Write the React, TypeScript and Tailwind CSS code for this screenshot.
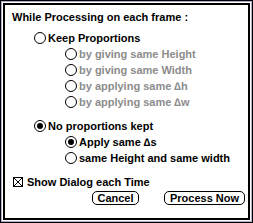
import React from 'react';

const font = "font-['Liberation_Sans',Arial,sans-serif]";

const Radio: React.FC<{ checked?: boolean }> = ({ checked }) => (
  <span className="flex h-[12px] w-[12px] shrink-0 items-center justify-center rounded-full border border-black bg-white">
    {checked && <span className="h-[6px] w-[6px] rounded-full bg-black" />}
  </span>
);

const Option: React.FC<{ label: string; checked?: boolean; disabled?: boolean; indent: string }> = ({
  label,
  checked,
  disabled,
  indent,
}) => (
  <div className={`flex h-[16px] items-center gap-[2px] ${indent}`}>
    <Radio checked={checked} />
    <span className={`text-[11px] font-bold leading-none ${disabled ? 'text-[#8c8c8c]' : 'text-black'}`}>{label}</span>
  </div>
);

const MacButton: React.FC<{ label: string; width: string }> = ({ label, width }) => (
  <button
    className={`flex h-[14px] items-center justify-center rounded-[5px] border border-black bg-white text-[11px] font-bold leading-none text-black ${width}`}
  >
    {label}
  </button>
);

export default function App() {
  return (
    <div className={`h-[223px] w-[253px] bg-white ${font}`}>
      <div className="h-full w-full border border-black">
        <div className="h-full w-full border border-[#b4a8cc]">
          <div className="h-full w-full border border-white">
            <div className="h-full w-full border-2 border-black pl-[7px] pt-[4px]">
              {/* Header */}
              <div className="flex h-[16px] items-center text-[11px] font-bold leading-none text-black">
                While Processing on each frame :
              </div>

              <div className="mt-[5px]">
                <Option label="Keep Proportions" indent="ml-[22px]" />
                <Option label="by giving same Height" disabled indent="ml-[53px]" />
                <Option label="by giving same Width" disabled indent="ml-[53px]" />
                <Option label="by applying same ∆h" disabled indent="ml-[53px]" />
                <Option label="by applying same ∆w" disabled indent="ml-[53px]" />
              </div>

              <div className="mt-[8px]">
                <Option label="No proportions kept" checked indent="ml-[22px]" />
                <Option label="Apply same ∆s" checked indent="ml-[53px]" />
                <Option label="same Height and same width" indent="ml-[53px]" />
              </div>

              {/* Checkbox */}
              <div className="mt-[8px] flex h-[16px] items-center gap-[4px] pl-[1px]">
                <svg width="10" height="10" viewBox="0 0 10 10" className="shrink-0">
                  <rect x="0.5" y="0.5" width="9" height="9" fill="white" stroke="black" />
                  <path d="M1 1 L9 9 M9 1 L1 9" stroke="black" strokeWidth="1" />
                </svg>
                <span className="text-[11px] font-bold leading-none text-black">Show Dialog each Time</span>
              </div>

              {/* Buttons */}
              <div className="mt-[1px] flex">
                <div className="ml-[80px]">
                  <MacButton label="Cancel" width="w-[47px]" />
                </div>
                <div className="ml-[25px]">
                  <MacButton label="Process Now" width="w-[81px]" />
                </div>
              </div>
            </div>
          </div>
        </div>
      </div>
    </div>
  );
}
